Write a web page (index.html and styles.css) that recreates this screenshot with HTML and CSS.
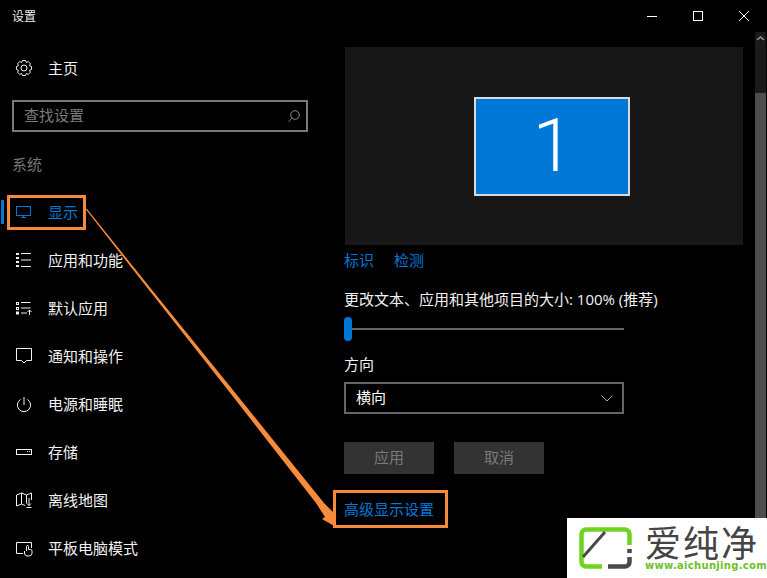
FILE: index.html
```html
<!DOCTYPE html>
<html lang="zh-CN">
<head>
<meta charset="utf-8">
<title>设置</title>
<link rel="stylesheet" href="styles.css">
</head>
<body>
<div class="window">
  <header class="titlebar">
    <span class="title">设置</span>
    <div class="controls">
      <span class="ctl"><svg width="10" height="10" viewBox="0 0 10 10"><path d="M0 5.5H10" stroke="#fff" fill="none"/></svg></span>
      <span class="ctl"><svg width="10" height="10" viewBox="0 0 10 10"><rect x=".5" y=".5" width="9" height="9" stroke="#fff" fill="none"/></svg></span>
      <span class="ctl"><svg width="10" height="10" viewBox="0 0 10 10"><path d="M0 0L10 10M10 0L0 10" stroke="#fff" fill="none"/></svg></span>
    </div>
  </header>
  <div class="main">
    <aside class="sidebar">
      <div class="nav-item home">
        <svg class="icon" viewBox="0 0 16 16"><path class="ln" d="M13.56 5.75L15.56 6.53V9.47L13.56 10.25L14.38 12.31L12.31 14.38L10.3 13.54L9.47 15.56H6.53L5.7 13.54L3.69 14.38L1.62 12.31L2.46 10.3L.44 9.47V6.53L2.46 5.7L1.62 3.69L3.69 1.62L5.7 2.46L6.53 .44H9.47L10.3 2.46L12.31 1.62L14.38 3.69Z"/><circle class="ln" cx="8" cy="8" r="3"/></svg>
        <span>主页</span>
      </div>
      <div class="search">
        <span>查找设置</span>
        <svg class="search-icon" viewBox="0 0 12 12"><circle cx="7" cy="5" r="4.3"/><path d="M4 8.2L.6 11.6"/></svg>
      </div>
      <div class="section">系统</div>
      <nav class="nav">
        <div class="nav-item active">
          <svg class="icon" viewBox="0 0 16 16"><rect class="ln" x=".5" y="2.5" width="14" height="9"/><path class="ln" d="M7.5 11.5V13.5M5 13.5H10"/></svg>
          <span>显示</span>
        </div>
        <div class="nav-item">
          <svg class="icon" viewBox="0 0 16 16"><path class="fl" d="M0 1h3v2H0zM0 5h3v2H0zM0 9h3v2H0zM0 13h3v2H0z"/><path class="ln" d="M5 1.500H15M5 8H15M5 14.500H15"/></svg>
          <span>应用和功能</span>
        </div>
        <div class="nav-item">
          <svg class="icon" viewBox="0 0 16 16"><rect class="ln" x=".5" y="2.5" width="2" height="2"/><rect class="ln" x=".5" y="7.5" width="2" height="2"/><rect class="ln" x=".5" y="12" width="2" height="2"/><path class="ln" d="M5 2.500H14.500M5 8H14.500M5 13H11M13.500 15V10M11.500 12L13.500 10L15.500 12"/></svg>
          <span>默认应用</span>
        </div>
        <div class="nav-item">
          <svg class="icon" viewBox="0 0 16 16"><path class="ln" d="M.5 .5H15.500V12.500H10.500L8 15L5.500 12.500H.5Z"/></svg>
          <span>通知和操作</span>
        </div>
        <div class="nav-item">
          <svg class="icon" viewBox="0 0 16 16"><path class="ln" d="M8 1V9M4.600 3.400A6.600 6.600 0 1 0 11.400 3.400"/></svg>
          <span>电源和睡眠</span>
        </div>
        <div class="nav-item">
          <svg class="icon" viewBox="0 0 16 16"><rect class="ln" x=".5" y="5.5" width="15" height="5"/><path class="fl" d="M11 7h1v1h-1zM13 7h1v1h-1z"/></svg>
          <span>存储</span>
        </div>
        <div class="nav-item">
          <svg class="icon" viewBox="0 0 16 16"><path class="ln" d="M10.500 11.500L10.500 3L15.500 1V8M10.500 3L5.500 1L.5 3V14L5.500 12L9 13.500M5.500 1V12M13 6V13.500M11 11.500L13 13.500L15 11.500M10.500 15.500H15.500"/></svg>
          <span>离线地图</span>
        </div>
        <div class="nav-item">
          <svg class="icon" viewBox="0 0 16 16"><path class="ln" d="M7 13.500H.5V2.500H15.500V8M10.500 11V6.500A1 1 0 0 1 12.500 6.500V9.500H14.500A1.500 1.500 0 0 1 16 11V13.500A3 3 0 0 1 13 16H11A3 3 0 0 1 8.500 13V11"/></svg>
          <span>平板电脑模式</span>
        </div>
      </nav>
    </aside>
    <section class="content">
      <div class="preview">
        <div class="monitor">1</div>
      </div>
      <div class="links">
        <span class="link">标识</span>
        <span class="link">检测</span>
      </div>
      <div class="label scale-label">更改文本、应用和其他项目的大小: 100% (推荐)</div>
      <div class="slider"><span class="thumb"></span></div>
      <div class="label dir-label">方向</div>
      <div class="select">
        <span>横向</span>
        <svg class="chev" viewBox="0 0 12 7"><path d="M.5 .5L6 6L11.500 .5"/></svg>
      </div>
      <div class="buttons">
        <span class="btn">应用</span>
        <span class="btn">取消</span>
      </div>
      <div class="link advanced">高级显示设置</div>
    </section>
    <div class="scrollbar">
      <svg class="scroll-up" viewBox="0 0 11 7"><path d="M2 5L5.500 2L9 5"/></svg>
      <div class="scroll-thumb"></div>
    </div>
  </div>
</div>

<div class="mark mark-display"></div>
<div class="mark mark-advanced"></div>
<svg class="arrow" width="767" height="578" viewBox="0 0 767 578"><polygon points="87,209 152,290 230.500,387 324,503 333,512 336,527 322,519 325,517 316,503 225.500,387 149,290 85.500,209"/></svg>

<div class="watermark">
  <svg class="wm-logo" viewBox="0 0 60 48"><path class="wm-green" d="M53.500 22V11A4.500 4.500 0 0 0 49 6.500H10A4.500 4.500 0 0 0 5.500 11V39A4.500 4.500 0 0 0 10 43.500H26"/><path class="wm-dark" d="M32 43.500H49A4.500 4.500 0 0 0 53.500 39V34M53.500 26V30"/><path class="wm-slash" d="M7 34L29 9"/></svg>
  <div class="wm-text">
    <div class="wm-name">爱纯净</div>
    <div class="wm-url">www.aichunjing.com</div>
  </div>
</div>
</body>
</html>
```

FILE: styles.css
```css
* { box-sizing: border-box; }
html, body { margin: 0; padding: 0; }
body {
  width: 767px;
  height: 578px;
  overflow: hidden;
  position: relative;
  background: #000;
  color: #fff;
  font-family: "Noto Sans CJK SC", "Liberation Sans", sans-serif;
  font-size: 15px;
}
.window { display: flex; flex-direction: column; height: 578px; }
.titlebar { height: 32px; display: flex; align-items: center; justify-content: space-between; flex: none; }
.title { font-size: 12px; margin-left: 12px; color: #eee; padding-bottom: 1px; }
.controls { display: flex; }
.ctl { width: 46px; height: 32px; display: flex; align-items: center; justify-content: center; }
.ctl svg { display: block; }
.main { display: flex; flex: 1; min-height: 0; }
.sidebar { width: 320px; flex: none; padding-top: 12px; }
.nav-item {
  height: 48px;
  display: flex;
  align-items: center;
  gap: 16px;
  padding-left: 16px;
  position: relative;
  color: #f2f2f2;
}
.nav-item span { padding-bottom: 2px; }
.icon { width: 16px; height: 16px; flex: none; overflow: visible; }
.ln { fill: none; stroke: currentColor; stroke-width: 1; }
.fl { fill: currentColor; }
.nav-item.active { color: #0078d7; }
.nav-item.active::before {
  content: "";
  position: absolute;
  left: 1px;
  top: 12px;
  width: 3px;
  height: 24px;
  background: #0078d7;
}
.search {
  margin: 8px 12px 0;
  height: 32px;
  width: 296px;
  border: 2px solid #7a7a7a;
  padding: 0 6px 0 10px;
  display: flex;
  align-items: center;
  justify-content: space-between;
  color: #7a7a7a;
}
.search span { padding-bottom: 4px; }
.search-icon { width: 12px; height: 12px; fill: none; stroke: #8a8a8a; stroke-width: 1; }
.section { height: 56px; padding: 22px 0 0 12px; line-height: 20px; color: #767676; }
.nav { display: flex; flex-direction: column; }
.content { width: 434px; flex: none; padding: 15px 0 0 24px; }
.preview {
  width: 398px;
  height: 198px;
  margin-left: 1px;
  background: #171717;
  display: flex;
  align-items: center;
  justify-content: center;
  padding-left: 16px;
}
.monitor {
  width: 156px;
  height: 99px;
  background: #0078d7;
  border: 2px solid #d9d9d9;
  padding-left: 2px;
  display: flex;
  align-items: center;
  justify-content: center;
  font-family: Roboto, sans-serif;
  font-weight: 300;
  font-size: 74px;
  line-height: 1;
}
.links { display: flex; gap: 20px; height: 30px; align-items: center; padding-bottom: 2px; }
.link { color: #0078d7; }
.label { line-height: 20px; color: #f2f2f2; }
.scale-label { margin-top: 14px; font-family: "Open Sans", "Noto Sans CJK SC", sans-serif; white-space: nowrap; }
.slider { width: 280px; height: 24px; margin-top: 8px; position: relative; display: flex; align-items: center; }
.slider::before { content: ""; display: block; width: 100%; height: 2px; background: #666; }
.thumb { position: absolute; left: 0; top: 0; width: 8px; height: 24px; border-radius: 4px; background: #0078d7; }
.dir-label { margin-top: 13px; }
.select {
  margin-top: 8px;
  width: 280px;
  height: 32px;
  border: 2px solid #666;
  padding: 0 9px 0 10px;
  display: flex;
  align-items: center;
  justify-content: space-between;
  color: #fff;
}
.select span { padding-bottom: 4px; }
.chev { width: 12px; height: 7px; fill: none; stroke: #aaa; stroke-width: 1; }
.buttons { display: flex; gap: 20px; margin-top: 28px; }
.btn { width: 90px; height: 32px; background: #333; color: #7a7a7a; display: flex; align-items: center; justify-content: center; padding-bottom: 3px; }
.advanced { margin-top: 25px; line-height: 20px; }
.scrollbar { width: 11px; margin-left: 1px; flex: none; background: #1a1a1a; display: flex; flex-direction: column; }
.scroll-up { width: 11px; height: 7px; margin-top: 3px; flex: none; fill: none; stroke: #999; stroke-width: 1.5; }
.scroll-thumb { margin-top: 51px; flex: 1; background: #4d4d4d; }
.mark { position: absolute; border: 3px solid #f68b3a; }
.mark-display { left: 7px; top: 195px; width: 79px; height: 35px; }
.mark-advanced { left: 333px; top: 490px; width: 115px; height: 38px; }
.arrow { position: absolute; left: 0; top: 0; pointer-events: none; }
.arrow polygon { fill: #f68b3a; }
.watermark {
  position: absolute;
  left: 567px;
  top: 518px;
  width: 200px;
  height: 60px;
  background: #fff;
  display: flex;
  align-items: flex-start;
  padding: 5px 0 0 9px;
  gap: 9px;
}
.wm-logo { width: 60px; height: 48px; flex: none; fill: none; }
.wm-green { stroke: #6fd321; stroke-width: 4.5; fill: none; }
.wm-dark { stroke: #4a4a4a; stroke-width: 4.5; fill: none; }
.wm-slash { stroke: #4a4a4a; stroke-width: 3; fill: none; }
.wm-text { display: flex; flex-direction: column; }
.wm-name { font-size: 36px; line-height: 37px; letter-spacing: 2px; color: #444; white-space: nowrap; }
.wm-url { font-family: "DejaVu Sans", sans-serif; font-weight: 700; font-size: 10px; line-height: 11px; color: #6fbf2a; letter-spacing: .3px; white-space: nowrap; }
```
